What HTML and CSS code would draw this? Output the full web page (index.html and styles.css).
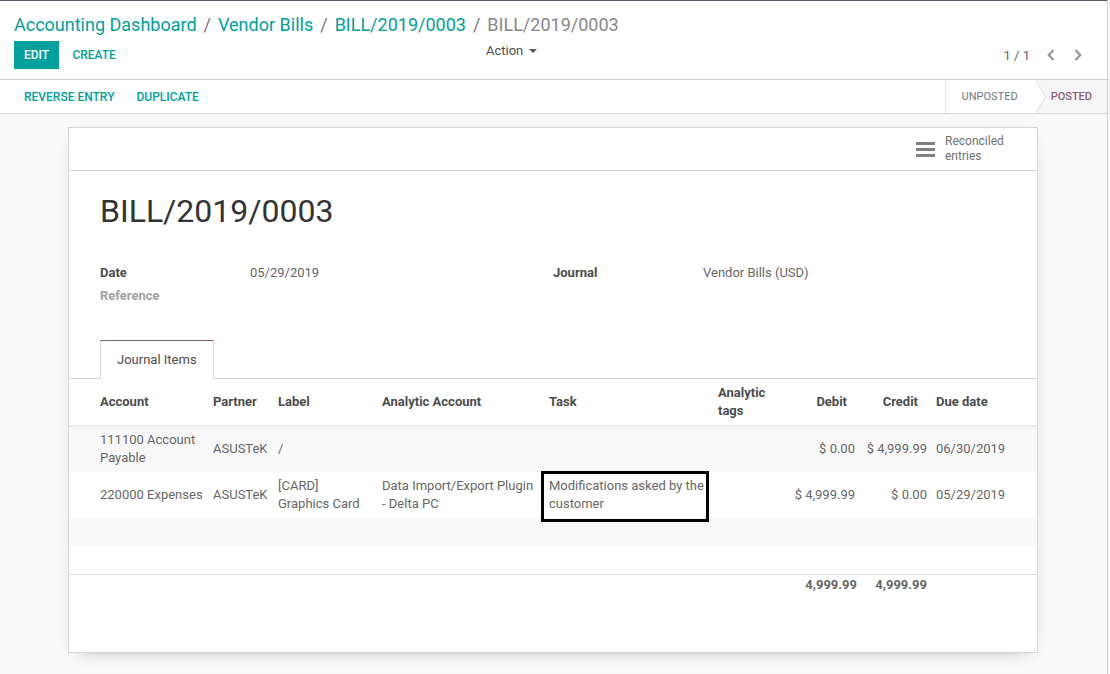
FILE: index.html
```html
<!DOCTYPE html>
<html>
<head>
<meta charset="utf-8">
<title>BILL/2019/0003</title>
<link rel="stylesheet" href="styles.css">
</head>
<body>
<div class="app">
  <div class="topline"></div>
  <div class="control-panel">
    <ol class="breadcrumb">
      <li><a href="#">Accounting Dashboard</a></li>
      <li class="sep">/</li>
      <li><a href="#">Vendor Bills</a></li>
      <li class="sep">/</li>
      <li><a href="#">BILL/2019/0003</a></li>
      <li class="sep">/</li>
      <li class="active">BILL/2019/0003</li>
    </ol>
    <div class="cp-row">
      <div class="cp-left">
        <div class="cp-buttons">
          <button class="btn btn-primary">Edit</button>
          <button class="btn btn-link">Create</button>
        </div>
        <div class="cp-action">Action <span class="caret"></span></div>
      </div>
      <div class="cp-right">
        <span class="pager-value">1 / 1</span>
        <button class="pager-btn" aria-label="Previous">
          <svg width="8" height="12" viewBox="0 0 8 12"><path d="M6.5 1 L1.8 6 L6.5 11" fill="none" stroke="#9a9a9a" stroke-width="2.4"/></svg>
        </button>
        <button class="pager-btn" aria-label="Next">
          <svg width="8" height="12" viewBox="0 0 8 12"><path d="M1.5 1 L6.2 6 L1.5 11" fill="none" stroke="#9a9a9a" stroke-width="2.4"/></svg>
        </button>
      </div>
    </div>
  </div>

  <div class="statusbar">
    <div class="sb-left">
      <button class="btn btn-sb">Reverse Entry</button>
      <button class="btn btn-sb">Duplicate</button>
    </div>
    <div class="sb-right">
      <div class="status unposted">Unposted</div>
      <div class="status posted">Posted</div>
    </div>
  </div>

  <div class="content">
    <div class="sheet">
      <div class="button-box">
        <div class="stat-btn">
          <svg class="stat-icon" width="19" height="15" viewBox="0 0 19 15"><rect x="0" y="0" width="19" height="3" fill="#808080"/><rect x="0" y="6" width="19" height="3" fill="#808080"/><rect x="0" y="12" width="19" height="3" fill="#808080"/></svg>
          <span class="stat-text">Reconciled<br>entries</span>
        </div>
      </div>

      <h1 class="title">BILL/2019/0003</h1>

      <div class="groups">
        <div class="group">
          <div class="label">Date</div><div class="value">05/29/2019</div>
          <div class="label muted">Reference</div><div class="value"></div>
        </div>
        <div class="group">
          <div class="label">Journal</div><div class="value">Vendor Bills (USD)</div>
        </div>
      </div>

      <div class="notebook">
        <ul class="tabs">
          <li class="tab active">Journal Items</li>
        </ul>
      </div>

      <table class="lines">
        <colgroup>
          <col class="c-account"><col class="c-partner"><col class="c-label"><col class="c-analytic"><col class="c-task"><col class="c-tags"><col class="c-debit"><col class="c-credit"><col class="c-due">
        </colgroup>
        <thead>
          <tr>
            <th class="first">Account</th>
            <th>Partner</th>
            <th class="lbl">Label</th>
            <th class="analytic">Analytic Account</th>
            <th>Task</th>
            <th>Analytic tags</th>
            <th class="num debit">Debit</th>
            <th class="num credit">Credit</th>
            <th class="due">Due date</th>
          </tr>
        </thead>
        <tbody>
          <tr class="odd">
            <td class="first">111100 Account Payable</td>
            <td>ASUSTeK</td>
            <td class="lbl">/</td>
            <td class="analytic"></td>
            <td></td>
            <td></td>
            <td class="num">$ 0.00</td>
            <td class="num">$ 4,999.99</td>
            <td class="due">06/30/2019</td>
          </tr>
          <tr>
            <td class="first">220000 Expenses</td>
            <td>ASUSTeK</td>
            <td class="lbl">[CARD] Graphics Card</td>
            <td class="analytic">Data Import/Export Plugin - Delta PC</td>
            <td><div class="highlight">Modifications asked by the customer</div></td>
            <td></td>
            <td class="num">$ 4,999.99</td>
            <td class="num">$ 0.00</td>
            <td class="due">05/29/2019</td>
          </tr>
          <tr class="odd empty"><td class="first">&nbsp;</td><td></td><td></td><td></td><td></td><td></td><td></td><td></td><td></td></tr>
          <tr class="empty"><td class="first">&nbsp;</td><td></td><td></td><td></td><td></td><td></td><td></td><td></td><td></td></tr>
        </tbody>
        <tfoot>
          <tr>
            <td class="first"></td><td></td><td></td><td></td><td></td><td></td>
            <td class="num total t-debit">4,999.99</td>
            <td class="num total t-credit">4,999.99</td>
            <td></td>
          </tr>
        </tfoot>
      </table>
    </div>
  </div>
</div>
</body>
</html>
```

FILE: styles.css
```css
html, body {
  margin: 0;
  padding: 0;
}

body {
  font-family: Roboto, "Noto Sans", "Liberation Sans", sans-serif;
  font-size: 13px;
  color: #4c4c4c;
  background: #f9f9f9;
}

.app {
  width: 1108px;
  min-height: 674px;
  box-sizing: border-box;
  border-right: 1px solid #cfcfcf;
  background: #f9f9f9;
  display: flex;
  flex-direction: column;
}

.topline {
  height: 1px;
  background: #6c4c65;
}

/* ---------- control panel ---------- */
.control-panel {
  background: #fff;
  border-bottom: 1px solid #d0d0d0;
  padding: 10px 16px 10px 14px;
}

.breadcrumb {
  display: flex;
  margin: 0;
  padding: 0;
  list-style: none;
  font-size: 18px;
  line-height: 28px;
}

.breadcrumb a {
  color: #00a09d;
  text-decoration: none;
}

.breadcrumb .sep {
  color: #777;
  padding: 0 7px;
}

.breadcrumb .active {
  color: #888;
}

.cp-row {
  display: grid;
  grid-template-columns: 1fr 1fr;
  margin-top: 2px;
  height: 28px;
}

.cp-left {
  display: flex;
  justify-content: space-between;
  align-items: flex-start;
}

.btn {
  font-family: Roboto, "Noto Sans", sans-serif;
  font-size: 12px;
  font-weight: 500;
  text-transform: uppercase;
  border: 0;
  height: 28px;
  cursor: pointer;
  background: none;
}

.btn-primary {
  background: #00a09d;
  color: #fff;
  padding: 0 10px;
}

.btn-link {
  color: #00a09d;
  padding: 0 10px;
  margin-left: 0;
}

.cp-action {
  font-size: 13px;
  line-height: 18px;
  padding: 1px 16px 0 0;
  color: #4c4c4c;
}

.caret {
  display: inline-block;
  width: 0;
  height: 0;
  margin-left: 2px;
  vertical-align: 2px;
  border-top: 4px solid #555;
  border-left: 4px solid transparent;
  border-right: 4px solid transparent;
}

.cp-right {
  display: flex;
  justify-content: flex-end;
  align-items: center;
}

.pager-value {
  font-size: 13px;
  color: #666;
  margin-right: 7px;
}

.pager-btn {
  width: 27px;
  height: 28px;
  border: 0;
  background: none;
  padding: 0;
  display: flex;
  align-items: center;
  justify-content: center;
}

/* ---------- status bar ---------- */
.statusbar {
  display: flex;
  justify-content: space-between;
  height: 33px;
  background: #fff;
  border-bottom: 1px solid #d6d6d6;
}

.sb-left {
  display: flex;
  align-items: center;
  padding-left: 13px;
}

.btn-sb {
  color: #00a09d;
  padding: 0 11px;
  height: 33px;
}

.sb-right {
  display: flex;
}

.status {
  position: relative;
  display: flex;
  align-items: center;
  font-size: 11px;
  text-transform: uppercase;
}

.status.unposted {
  padding: 0 18px 0 16px;
  border-left: 1px solid #e4e4e4;
  color: #777;
  font-weight: 400;
  background: #fff;
  z-index: 1;
}

.status.unposted::after,
.status.unposted::before {
  content: "";
  position: absolute;
  top: 0;
  width: 0;
  height: 0;
  border-top: 17px solid transparent;
  border-bottom: 16px solid transparent;
}

.status.unposted::after {
  right: -10px;
  border-left: 10px solid #e0e0e0;
}

.status.unposted::before {
  right: -9px;
  border-left: 10px solid #fff;
  z-index: 1;
}

.status.posted {
  padding: 0 15px 0 15px;
  color: #875a7b;
  font-weight: 500;
  background: #f6f6f6;
}

/* ---------- sheet ---------- */
.content {
  flex: 1;
  padding: 13px 0 22px;
}

.sheet {
  width: 970px;
  margin: 0 0 0 68px;
  box-sizing: border-box;
  background: #fff;
  border: 1px solid #d6d6d6;
  box-shadow: 0 6px 18px -12px rgba(0, 0, 0, 0.45);
  padding-bottom: 53px;
}

.button-box {
  display: flex;
  justify-content: flex-end;
  height: 42px;
  border-bottom: 1px solid #d6d6d6;
}

.stat-btn {
  width: 132px;
  box-sizing: border-box;
  display: flex;
  align-items: center;
  padding-left: 11px;
}

.stat-icon {
  margin-right: 10px;
  flex: none;
}

.stat-text {
  font-size: 12px;
  line-height: 15px;
  color: #707070;
}

.title {
  margin: 16px 0 0;
  padding: 0 31px;
  font-size: 32px;
  line-height: 48px;
  font-weight: 400;
  color: #333;
}

.groups {
  display: grid;
  grid-template-columns: 1fr 1fr;
  margin-top: 26px;
  padding: 0 31px;
}

.group {
  display: grid;
  grid-template-columns: 150px 1fr;
  grid-auto-rows: 23px;
  align-items: center;
}

.label {
  font-weight: 700;
  color: #4c4c4c;
}

.label.muted {
  color: #a0a0a0;
}

.value {
  color: #666;
}

.notebook {
  margin-top: 33px;
}

.tabs {
  list-style: none;
  margin: 0;
  padding: 0 0 0 31px;
  display: flex;
  border-bottom: 1px solid #d6d6d6;
}

.tab {
  padding: 0 16px 1px;
  height: 37px;
  line-height: 37px;
  color: #4c4c4c;
  border: 1px solid #d6d6d6;
  border-top-color: #875a7b;
  border-bottom: 0;
  background: #fff;
  margin-bottom: -1px;
}

/* ---------- lines table ---------- */
.lines {
  width: 100%;
  border-collapse: collapse;
  table-layout: fixed;
}

.c-account { width: 140px; }
.c-partner { width: 65px; }
.c-label { width: 104px; }
.c-analytic { width: 167px; }
.c-task { width: 169px; }
.c-tags { width: 65px; }
.c-debit { width: 80px; }
.c-credit { width: 72px; }
.c-due { width: 106px; }

.lines th,
.lines td {
  padding: 5px 4px;
  line-height: 18px;
  vertical-align: middle;
  text-align: left;
}

.lines th {
  font-weight: 700;
  color: #4c4c4c;
}

.lines thead tr {
  border-bottom: 1px solid #e6e6e6;
}

.lines td {
  color: #666;
}

.lines .first {
  padding-left: 31px;
}

.lines .lbl {
  padding-right: 10px;
}

.lines .analytic {
  padding-right: 9px;
}

.lines .num {
  text-align: right;
}

.lines th.debit {
  padding-right: 12px;
}

.lines th.credit {
  padding-right: 13px;
}

.lines .due {
  padding-left: 5px;
}

.lines tbody tr.odd {
  background: #f8f8f8;
}

.lines tbody tr:first-child td {
  box-shadow: inset 0 4px 4px -4px rgba(0, 0, 0, 0.08);
}

.lines tfoot tr {
  border-top: 1px solid #dcdcdc;
}

.lines tfoot td {
  padding: 1px 4px 5px;
}

.lines td.total {
  font-weight: 700;
  color: #666;
}

.lines td.t-debit {
  padding-right: 2px;
}

.lines td.t-credit {
  padding-right: 4px;
}

.highlight {
  position: relative;
}

.highlight::after {
  content: "";
  position: absolute;
  top: -6px;
  bottom: -9px;
  left: -8px;
  right: 1px;
  border: 3px solid #000;
}
```
